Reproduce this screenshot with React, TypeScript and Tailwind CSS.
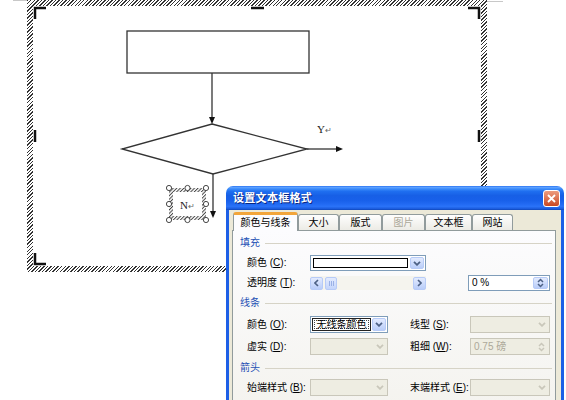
import React from 'react';

// Word page with a drawing canvas and the XP "设置文本框格式" dialog on top

function Chevron({ disabled }: { disabled?: boolean }) {
  return (
    <svg width="8" height="5" viewBox="0 0 8 5">
      <path d="M1 0.8 L4 3.8 L7 0.8" fill="none" stroke={disabled ? '#C9C7BA' : '#4D6185'} strokeWidth="1.8" />
    </svg>
  );
}

function DropBtn({ disabled }: { disabled?: boolean }) {
  if (disabled) {
    return (
      <div className="w-[14px] h-full flex items-center justify-center">
        <Chevron disabled />
      </div>
    );
  }
  return (
    <div className="w-[14px] h-full flex items-center justify-center rounded-[2px] border border-[#B7CBF7] bg-gradient-to-b from-[#E3EBFE] to-[#B9CDF9]">
      <Chevron />
    </div>
  );
}

function SpinArrows({ disabled }: { disabled?: boolean }) {
  const c = disabled ? '#C9C7BA' : '#4D6185';
  return (
    <svg width="7" height="10" viewBox="0 0 7 10">
      <path d="M1 4 L3.5 1.5 L6 4" fill="none" stroke={c} strokeWidth="1.5" />
      <path d="M1 6 L3.5 8.5 L6 6" fill="none" stroke={c} strokeWidth="1.5" />
    </svg>
  );
}

function Label({ text, k, className = 'w-[63px]' }: { text: string; k: string; className?: string }) {
  return (
    <span className={`${className} shrink-0 text-[10px] leading-[12px] text-black whitespace-nowrap`}>
      {text} (<span className="underline">{k}</span>):
    </span>
  );
}

function Heading({ children, className }: { children: React.ReactNode; className: string }) {
  return (
    <div className={`flex items-center gap-[5px] pl-[7px] pr-[3px] h-[12px] ${className}`}>
      <span className="text-[10px] leading-[12px] text-[#1E50B4]">{children}</span>
      <div className="flex-1 h-px bg-[#D6D3C6]" />
    </div>
  );
}

function DisabledCombo({ w }: { w: string }) {
  return (
    <div className={`${w} h-[17px] border border-[#C9C7BA] bg-[#EEEDE2] flex justify-end items-center`}>
      <DropBtn disabled />
    </div>
  );
}

const tabs = [
  { label: '大小', w: 'w-[41px]' },
  { label: '版式', w: 'w-[43px]' },
  { label: '图片', w: 'w-[43px]', disabled: true },
  { label: '文本框', w: 'w-[47px]' },
  { label: '网站', w: 'w-[41px]' },
];

function Canvas() {
  return (
    <div className="pl-[27px]">
      <div className="w-[460px] h-[272px] p-[6px] bg-[repeating-linear-gradient(135deg,#333333_0px,#333333_1px,#ffffff_1px,#ffffff_2.5px)]">
        <div className="relative w-full h-full bg-white">
          <svg className="absolute inset-0" width="448" height="260" viewBox="0 0 448 260">
            <defs>
              <pattern id="hatch" width="2.5" height="2.5" patternUnits="userSpaceOnUse" patternTransform="rotate(45)">
                <rect width="1" height="2.5" fill="#444" />
              </pattern>
            </defs>
            {/* corner marks */}
            <g fill="none" stroke="#111" strokeWidth="2.5">
              <polyline points="2,13 2,2 13,2" />
              <line x1="218" y1="2" x2="231" y2="2" />
              <polyline points="435,2 446,2 446,13" />
              <line x1="2" y1="124" x2="2" y2="136" />
              <line x1="446" y1="124" x2="446" y2="136" />
              <polyline points="2,247 2,258 13,258" />
            </g>
            {/* flowchart */}
            <g fill="none" stroke="#333" strokeWidth="1.3">
              <rect x="94" y="25" width="182" height="42" />
              <line x1="179" y1="67" x2="179" y2="112" />
              <polygon points="179,118 274,143 180,168 89,143" />
              <line x1="274" y1="143" x2="304" y2="143" />
              <line x1="180" y1="168" x2="180" y2="206" />
            </g>
            <g fill="#111">
              <polygon points="176,111 182,111 179,118" />
              <polygon points="303,140 303,146 310,143" />
              <polygon points="177,205 183,205 180,212" />
            </g>
            <text x="284" y="127" fontFamily="Liberation Serif, serif" fontSize="11" fill="#222">
              Y<tspan fontSize="8" fill="#666">↵</tspan>
            </text>
            {/* selected text box N */}
            <rect x="136" y="182" width="37" height="32" fill="url(#hatch)" />
            <rect x="140" y="186" width="29" height="24" fill="#fff" />
            <text x="147" y="203" fontFamily="Liberation Serif, serif" fontSize="11" fill="#222">
              N<tspan fontSize="8" fill="#666">↵</tspan>
            </text>
            <g fill="#fff" stroke="#333" strokeWidth="0.9">
              {[136, 154.5, 173].map((x) =>
                [182, 198, 214]
                  .filter((y) => !(x === 154.5 && y === 198))
                  .map((y) => <circle key={`${x}-${y}`} cx={x} cy={y} r="2.6" />)
              )}
            </g>
          </svg>
        </div>
      </div>
    </div>
  );
}

function Dialog() {
  return (
    <div className="absolute left-[226px] top-[186px] w-[338px] h-[230px] flex flex-col rounded-t-[7px] overflow-hidden font-['Liberation_Sans','Noto_Sans_CJK_SC',sans-serif]">
      {/* title bar */}
      <div className="h-[24px] shrink-0 flex items-center justify-between pl-[7px] pr-[4px] bg-[linear-gradient(to_bottom,#2B74F2_0%,#5BA0FF_6%,#3C8CFA_12%,#1F6FF0_22%,#175FE6_40%,#1860EA_60%,#2169F2_75%,#2A73F8_85%,#1C5EE0_94%,#0F46B8_100%)]">
        <span className="text-[11px] leading-[14px] font-bold text-white tracking-[0.3px] [text-shadow:1px_1px_#0A2680]">
          设置文本框格式
        </span>
        <div className="w-[17px] h-[17px] rounded-[3px] border border-white bg-gradient-to-b from-[#EC9C7E] to-[#C9461F] flex items-center justify-center">
          <svg width="9" height="9" viewBox="0 0 9 9">
            <path d="M1 1 L8 8 M8 1 L1 8" stroke="#fff" strokeWidth="1.8" />
          </svg>
        </div>
      </div>
      {/* body */}
      <div className="flex-1 flex flex-col bg-[#ECE9D8] border-x-[3px] border-[#1D5FE6] pl-[3px] pr-[5px] pt-[2px]">
        <div className="flex items-end h-[18px] pl-[1px] relative z-10">
          <div className="w-[65px] h-[19px] mb-[-1px] flex items-center justify-center rounded-t-[3px] border-x border-[#919B9C] border-t-[3px] border-t-[#F2A53A] bg-[#FCFCFE] text-[10px] leading-[12px] text-black">
            颜色与线条
          </div>
          {tabs.map((t) => (
            <div
              key={t.label}
              className={`${t.w} h-[16px] flex items-center justify-center rounded-t-[3px] border border-b-0 border-[#919B9C] bg-gradient-to-b from-[#FEFEFE] to-[#ECEBE5] text-[10px] leading-[12px] ${
                t.disabled ? 'text-[#ACA899]' : 'text-black'
              }`}
            >
              {t.label}
            </div>
          ))}
        </div>
        <div className="flex-1 flex flex-col border border-[#919B9C] bg-gradient-to-b from-[#FCFCFE] to-[#F4F3EE]">
          <Heading className="mt-[6px]">填充</Heading>

          <div className="mt-[6px] h-[16px] flex items-center pl-[14px]">
            <Label text="颜色" k="C" />
            <div className="w-[116px] h-[16px] border border-[#7F9DB9] bg-white flex p-[1px] gap-[1px]">
              <div className="flex-1 m-[1px] border border-black bg-white" />
              <DropBtn />
            </div>
          </div>

          <div className="mt-[4px] h-[16px] flex items-center pl-[14px]">
            <Label text="透明度" k="T" />
            <div className="w-[116px] h-[14px] bg-[#F5F4EE] flex items-center">
              <div className="w-[13px] h-[13px] rounded-[2px] border border-[#B7CBF7] bg-gradient-to-b from-[#E3EBFE] to-[#B9CDF9] flex items-center justify-center">
                <svg width="5" height="8" viewBox="0 0 5 8">
                  <path d="M4 1 L1 4 L4 7" fill="none" stroke="#4D6185" strokeWidth="1.6" />
                </svg>
              </div>
              <div className="ml-[2px] w-[12px] h-[13px] rounded-[2px] border border-[#B7CBF7] bg-gradient-to-b from-[#E3EBFE] to-[#C4D5FB] flex items-center justify-center gap-[1px]">
                <div className="w-px h-[5px] bg-[#9AB1E6]" />
                <div className="w-px h-[5px] bg-[#9AB1E6]" />
                <div className="w-px h-[5px] bg-[#9AB1E6]" />
              </div>
              <div className="flex-1" />
              <div className="w-[13px] h-[13px] rounded-[2px] border border-[#B7CBF7] bg-gradient-to-b from-[#E3EBFE] to-[#B9CDF9] flex items-center justify-center">
                <svg width="5" height="8" viewBox="0 0 5 8">
                  <path d="M1 1 L4 4 L1 7" fill="none" stroke="#4D6185" strokeWidth="1.6" />
                </svg>
              </div>
            </div>
            <div className="ml-[42px] w-[82px] h-[16px] border border-[#7F9DB9] bg-white flex items-center">
              <span className="flex-1 pl-[3px] text-[10px] leading-[12px] text-black">0 %</span>
              <div className="w-[15px] h-[12px] mr-[1px] rounded-[2px] border border-[#B7CBF7] bg-gradient-to-b from-[#E3EBFE] to-[#B9CDF9] flex items-center justify-center">
                <SpinArrows />
              </div>
            </div>
          </div>

          <Heading className="mt-[6px]">线条</Heading>

          <div className="mt-[7px] h-[17px] flex items-center pl-[14px]">
            <Label text="颜色" k="O" />
            <div className="w-[78px] h-[17px] border border-[#7F9DB9] bg-white flex p-[1px] gap-[1px]">
              <div className="flex-1 border border-[#222] p-[1px]">
                <div className="w-full h-full border border-dotted border-[#444] flex items-center justify-center text-[10px] leading-[10px] text-black">
                  无线条颜色
                </div>
              </div>
              <DropBtn />
            </div>
            <Label text="线型" k="S" className="ml-[22px] w-[60px]" />
            <DisabledCombo w="w-[80px]" />
          </div>

          <div className="mt-[5px] h-[17px] flex items-center pl-[14px]">
            <Label text="虚实" k="D" />
            <DisabledCombo w="w-[78px]" />
            <Label text="粗细" k="W" className="ml-[22px] w-[60px]" />
            <div className="w-[80px] h-[17px] border border-[#C9C7BA] bg-[#EEEDE2] flex items-center">
              <span className="flex-1 pl-[3px] text-[10px] leading-[12px] text-[#ACA899]">0.75 磅</span>
              <div className="w-[15px] h-[13px] flex items-center justify-center">
                <SpinArrows disabled />
              </div>
            </div>
          </div>

          <Heading className="mt-[7px]">箭头</Heading>

          <div className="mt-[5px] h-[17px] flex items-center pl-[14px]">
            <Label text="始端样式" k="B" />
            <DisabledCombo w="w-[78px]" />
            <Label text="末端样式" k="E" className="ml-[22px] w-[60px]" />
            <DisabledCombo w="w-[80px]" />
          </div>
        </div>
      </div>
    </div>
  );
}

export default function App() {
  return (
    <div className="relative w-[566px] h-[400px] overflow-hidden bg-white font-['Liberation_Sans','Noto_Sans_CJK_SC',sans-serif]">
      <div className="absolute left-[13px] top-0 w-[14px] h-px bg-[#C8C8C8]" />
      <div className="absolute left-[487px] top-[1px] w-[16px] h-px bg-[#C8C8C8]" />
      <Canvas />
      <Dialog />
    </div>
  );
}
